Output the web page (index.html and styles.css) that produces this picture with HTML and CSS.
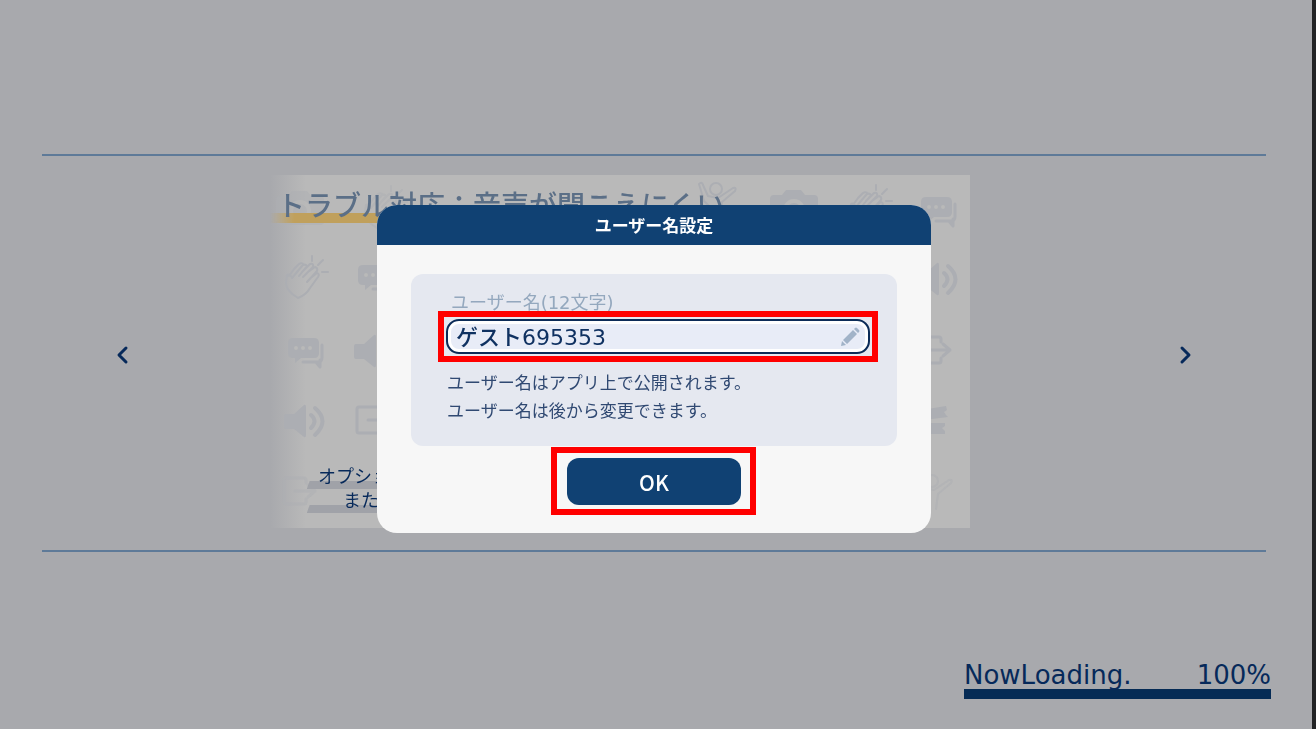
FILE: index.html
```html
<!DOCTYPE html>
<html lang="ja">
<head>
    <meta charset="UTF-8">
    <title>ユーザー名設定</title>
    <link rel="stylesheet" href="styles.css">
</head>
<body>
    <div class="screen">
        <main class="carousel">
            <button class="arrow" type="button" aria-label="前へ">
                <svg width="20" height="20" viewBox="0 0 20 20"><path d="M14 3L7 10L14 17"/></svg>
            </button>

            <section class="slide">
                <svg class="slide-icons" viewBox="0 0 700 353" preserveAspectRatio="xMidYMid slice" aria-hidden="true">
                    <defs>
                        <g id="chat">
                            <path class="fill" d="M-12-14H9Q14-14 14-9V1Q14 6 9 6H-4L-10 11V6H-12Q-17 6-17 1V-9Q-17-14-12-14Z"/>
                            <path class="line" d="M17-7V6Q17 10 12 10H-2M11 10L15 15V8" stroke-width="3"/>
                            <g class="dots"><circle cx="-9" cy="-4" r="2"/><circle cx="-2" cy="-4" r="2"/><circle cx="5" cy="-4" r="2"/></g>
                        </g>
                        <g id="speaker">
                            <path class="fill" d="M-19-7H-11L-1-16Q1-17 1-14V14Q1 17-1 16L-11 8H-19Q-21 8-21 6V-5Q-21-7-19-7Z"/>
                            <path class="line" d="M6-6Q13 0 6 7M10-13Q25 0 10 14" stroke-width="4"/>
                        </g>
                        <g id="exit">
                            <path class="line" d="M6-8V-11Q6-13 4-13H-14Q-16-13-16-11V11Q-16 13-14 13H4Q6 13 6 11V8M-5 0H15M8-6L15 0L8 6" stroke-width="3"/>
                        </g>
                        <g id="clap">
                            <path class="line" d="M-7 20Q-19 13-19 5L-18-3Q-15-5-13 0L-3-12Q0-15 2-12L-6-2M-3-6L5-14Q9-15 8-11L-2-1M3-6L10-11Q13-10 12-7L2 4M7-1L12-5Q15-4 13-1L5 10Q1 17-7 20M-16-2L-11-9L-6-14Q-3-16-1-13" stroke-width="2"/>
                            <path class="line" d="M7-22V-17M18-18L13-13M17-6H23" stroke-width="2"/>
                        </g>
                        <g id="camera">
                            <path class="fill" d="M-20-12H-12L-8-17H7L11-12H20Q24-12 24-8V13Q24 17 20 17H-20Q-24 17-24 13V-8Q-24-12-20-12Z"/>
                            <circle class="lens" cx="0" cy="3" r="11"/>
                            <circle class="fill" cx="0" cy="3" r="7"/>
                        </g>
                        <g id="person">
                            <circle class="line" cx="0" cy="-9" r="6" stroke-width="2"/>
                            <path class="line" d="M-17-14Q-14-17-13-13L-8-2L2 0L17-10Q21-11 19-7L6 4L4 19M-17-14L-12 3L-7 8L-10 22" stroke-width="2"/>
                        </g>
                        <g id="ticket">
                            <path class="fill" d="M-18-10L12-15L13-11L10-9L12-6L14-4L-18 0ZM-18 2H11V5L8 7L11 10V13H-18Z"/>
                        </g>
                    </defs>
                    <g opacity=".5">
                        <use href="#camera" x="30" y="33"/>
                        <use href="#clap" x="114" y="33"/>
                        <use href="#exit" x="30" y="316"/>
                        <use href="#person" x="662" y="315"/>
                    </g>
                    <use href="#clap" x="35" y="103"/>
                    <use href="#chat" x="105" y="104"/>
                    <use href="#chat" x="35" y="177"/>
                    <use href="#speaker" x="105" y="176"/>
                    <use href="#speaker" x="35" y="246"/>
                    <use href="#exit" x="103" y="245"/>
                    <use href="#person" x="446" y="23"/>
                    <use href="#camera" x="524" y="32"/>
                    <use href="#clap" x="599" y="32"/>
                    <use href="#chat" x="668" y="36"/>
                    <use href="#speaker" x="668" y="104"/>
                    <use href="#exit" x="665" y="175"/>
                    <use href="#ticket" x="664" y="246"/>
                </svg>
                <h2 class="slide-title">トラブル対応：音声が聞こえにくい</h2>
                <p class="slide-text">
                    <span class="marker">オプション</span>
                    <span class="marker second">また</span>
                </p>
            </section>

            <button class="arrow" type="button" aria-label="次へ">
                <svg width="20" height="20" viewBox="0 0 20 20"><path d="M6 3L13 10L6 17"/></svg>
            </button>
        </main>

        <footer class="loading">
            <div class="loading-text">
                <span>NowLoading.</span>
                <span>100%</span>
            </div>
            <div class="loading-bar"></div>
        </footer>
    </div>

    <div class="overlay">
        <form class="dialog" role="dialog" aria-labelledby="dialogTitle">
            <h1 class="dialog-title" id="dialogTitle">ユーザー名設定</h1>
            <div class="panel">
                <label class="name-label" for="userName">ユーザー名(12文字)</label>
                <div class="highlight">
                    <div class="field">
                        <input id="userName" type="text" value="ゲスト695353" maxlength="12">
                        <svg class="pencil" width="20" height="20" viewBox="0 0 20 20" aria-hidden="true">
                            <path d="M1 19L2 14L6 18ZM3 13L13 3L17 7L7 17ZM14 2L15 1Q16 0 17 1L19 3Q20 4 19 5L18 6Z"/>
                        </svg>
                    </div>
                </div>
                <p class="note">ユーザー名はアプリ上で公開されます。<br>ユーザー名は後から変更できます。</p>
            </div>
            <div class="highlight ok-area">
                <button class="ok-button" type="button">OK</button>
            </div>
        </form>
    </div>
</body>
</html>
```

FILE: styles.css
```css
* {
    box-sizing: border-box;
}
body {
    margin: 0;
    background: #222325;
    color: #06295a;
    font-family: "DejaVu Sans", "Noto Sans CJK JP", sans-serif;
}
h1, h2, p {
    margin: 0;
}
button {
    border: 0;
    padding: 0;
    font-family: inherit;
    cursor: pointer;
}
.screen {
    display: flex;
    flex-direction: column;
    min-height: 100vh;
    margin-right: 4px;
    padding: 154px 41px 30px 42px;
    background: #a8a9ad;
}

/* carousel */
.carousel {
    display: flex;
    align-items: center;
    margin-right: 5px;
    padding: 19px 70px 22px 70px;
    border-top: 2px solid #5e7a98;
    border-bottom: 2px solid #5e7a98;
}
.arrow {
    display: flex;
    width: 20px;
    padding-top: 7px;
    background: none;
}
.arrow path {
    fill: none;
    stroke: #06295a;
    stroke-width: 3;
    stroke-linecap: round;
    stroke-linejoin: round;
}
.slide {
    position: relative;
    flex: 1;
    min-width: 0;
    height: 353px;
    margin: 0 206px 0 138px;
    overflow: hidden;
    background: linear-gradient(to right, #a8a9ad, #b9b9b9 36px);
}
.slide-icons {
    position: absolute;
    inset: 0;
    width: 100%;
    height: 100%;
}
.fill {
    fill: #acaeb3;
}
.line {
    fill: none;
    stroke: #acaeb3;
    stroke-linecap: round;
    stroke-linejoin: round;
}
.dots {
    fill: #b9b9b9;
}
.lens {
    fill: #b9b9b9;
}
.slide-title {
    position: relative;
    height: 48px;
    padding: 12px 0 0 7px;
    background: linear-gradient(to right, transparent, #c0a05c 24px) 0 100% / 460px 10px no-repeat;
    color: #5b6f87;
    font-size: 28px;
    font-weight: 500;
    line-height: 40px;
    white-space: nowrap;
}
.slide-text {
    position: relative;
    display: flex;
    flex-direction: column;
    margin-top: 242px;
    padding-left: 37px;
    font-size: 18px;
    line-height: 24px;
}
.marker {
    width: 200px;
    padding-left: 11px;
    background: linear-gradient(110deg, transparent 2px, #a0a2a8 3px) 0 100% / 100% 8px no-repeat;
}
.second {
    padding-left: 36px;
}

/* loading */
.loading {
    width: 307px;
    margin-top: auto;
    margin-left: auto;
}
.loading-text {
    display: flex;
    justify-content: space-between;
    font-size: 26px;
    line-height: 28px;
}
.loading-bar {
    height: 10px;
    background: #052b55;
}

/* dialog */
.overlay {
    position: fixed;
    inset: 0;
    display: flex;
    align-items: center;
    justify-content: center;
    padding: 9px 8px 0 0;
}
.dialog {
    width: 554px;
    border-radius: 20px;
    padding-bottom: 18px;
    overflow: hidden;
    background: #f7f7f7;
}
.dialog-title {
    background: #104173;
    color: #fff;
    font-size: 17px;
    font-weight: bold;
    line-height: 42px;
    height: 40px;
    text-align: center;
}
.panel {
    margin: 29px 34px 1px 34px;
    padding: 21px 19px 22px 27px;
    border-radius: 12px;
    background: #e5e8f0;
}
.name-label {
    display: block;
    padding-left: 13px;
    color: #94a8be;
    font-size: 18px;
    line-height: 16px;
}
.highlight {
    border: 6px solid #f00;
    padding: 2px;
}
.field {
    display: flex;
    align-items: center;
    height: 35px;
    padding-right: 8px;
    border: 2px solid #0b2b57;
    border-radius: 13px;
    background: #e8ecf7;
    box-shadow: inset 0 0 0 3px #fff;
}
.field input {
    flex: 1;
    min-width: 0;
    height: 100%;
    padding: 0 8px 3px;
    border: 0;
    outline: 0;
    background: none;
    color: #0f3161;
    font-family: inherit;
    font-size: 22px;
    font-weight: 500;
}
.pencil {
    fill: #a1b3c8;
}
.note {
    margin-top: 7px;
    margin-bottom: -1px;
    padding-left: 9px;
    color: #304972;
    font-size: 17px;
    line-height: 28px;
}
.ok-area {
    width: 205px;
    margin: 0 auto 0 174px;
    padding: 5px 9px 4px 10px;
}
.ok-button {
    display: block;
    width: 100%;
    height: 47px;
    border-radius: 12px;
    background: #104173;
    color: #fff;
    font-family: "Noto Sans CJK JP", sans-serif;
    font-size: 21px;
    font-weight: 500;
    line-height: 44px;
}
```
